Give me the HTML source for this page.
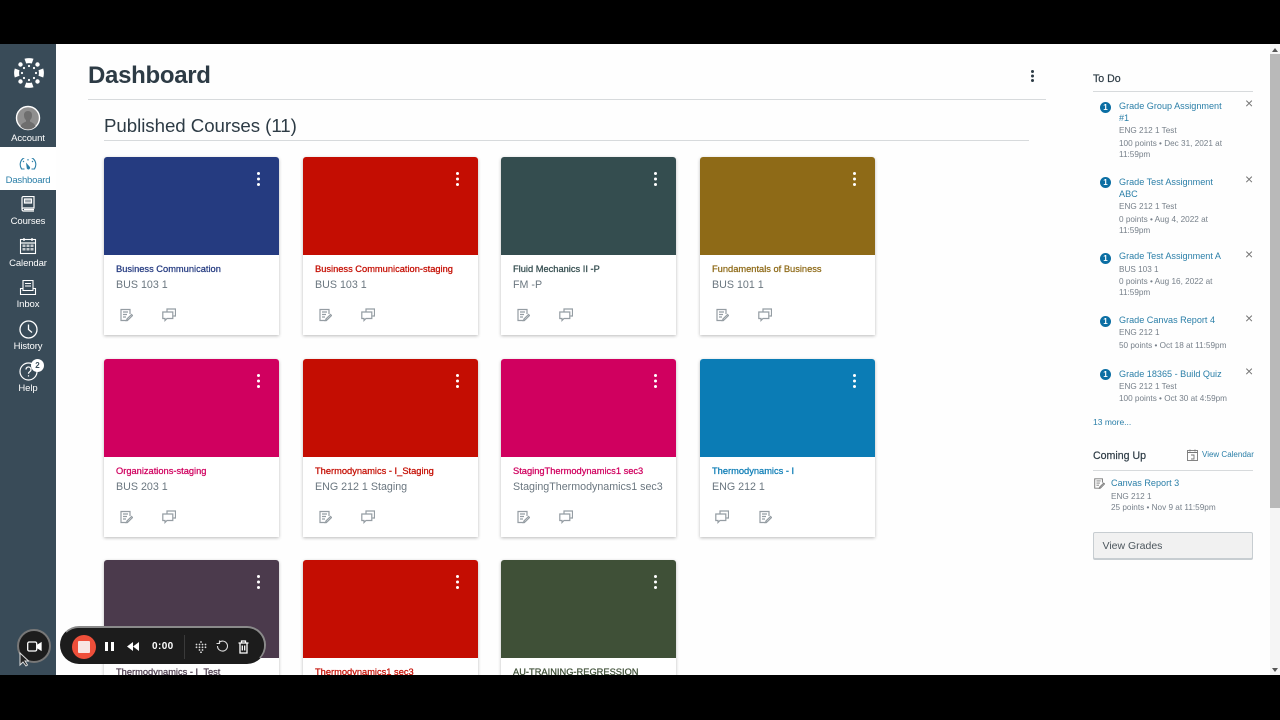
<!DOCTYPE html>
<html><head><meta charset="utf-8"><style>
html,body{margin:0;padding:0;width:1280px;height:720px;overflow:hidden;background:#000}
body{position:relative;font-family:"Liberation Sans",sans-serif}
#p{position:absolute;left:0;top:44px;width:1280px;height:631px;background:#fefefe;overflow:hidden;filter:blur(.3px)}
#p>*{position:absolute}
#nav{left:0;top:0;width:56px;height:631px;background:#394b58}
#act{left:0;top:103px;width:56px;height:43px;background:#fff}
.nl{left:0;width:56px;text-align:center;color:#fff;font-size:9.5px;line-height:12px;letter-spacing:-.1px}
.card{width:175px;height:178px;background:#fff;box-shadow:0 1px 3px rgba(0,0,0,.27);border-radius:3px 3px 0 0}
.card .h{position:absolute;left:0;top:0;width:175px;height:98px;border-radius:3px 3px 0 0}
.card .d{position:absolute;left:153px;top:15px;width:3.2px;height:3.2px;border-radius:50%;background:#fff;box-shadow:0 5.5px 0 #fff,0 11px 0 #fff}
.card .n{position:absolute;left:12px;top:106px;font-size:9.3px;line-height:12px;white-space:nowrap;-webkit-text-stroke:.25px currentColor}
.card .c{position:absolute;left:12px;top:120.5px;font-size:10.7px;color:#6b7780;line-height:14px;white-space:nowrap}
.card svg{position:absolute;top:151px;width:14px;height:14px;fill:none;stroke:#959da3;stroke-width:1.2}
.lk{color:#2b7fa8;font-size:9.1px;line-height:12px;white-space:nowrap}
.sm{color:#77808a;font-size:8.2px;line-height:11px;white-space:nowrap}
.bd{width:11px;height:11px;border-radius:50%;background:#0b6ea3;color:#fff;font-size:8px;font-weight:bold;text-align:center;line-height:11px}
.x{color:#777;font-size:14px;line-height:11px}
.rule{height:1px;background:#d7dadc}
</style></head><body>
<div id="p">
<div id="nav"></div>
<div id="act"></div>

<svg style="left:13.500px;top:13.500px" width="30" height="30" viewBox="0 0 30 30"><g fill="#fff"><path d="M10.500 .8a15 15 0 0 1 9 0l-1.700 4.700a9.500 9.500 0 0 0-5.600 0z"/><path d="M10.500 29.200a15 15 0 0 0 9 0l-1.700-4.700a9.500 9.500 0 0 1-5.600 0z"/><path d="M.8 10.500a15 15 0 0 0 0 9l4.700-1.700a9.500 9.500 0 0 1 0-5.600z"/><path d="M29.200 10.500a15 15 0 0 1 0 9l-4.700-1.700a9.500 9.500 0 0 0 0-5.600z"/><circle cx="6.500" cy="6.500" r="2.200"/><circle cx="23.500" cy="6.500" r="2.200"/><circle cx="6.500" cy="23.500" r="2.200"/><circle cx="23.500" cy="23.500" r="2.200"/><circle cx="15" cy="8" r="1.100"/><circle cx="15" cy="22" r="1.100"/><circle cx="8" cy="15" r="1.100"/><circle cx="22" cy="15" r="1.100"/><circle cx="10" cy="10" r="1.100"/><circle cx="20" cy="10" r="1.100"/><circle cx="10" cy="20" r="1.100"/><circle cx="20" cy="20" r="1.100"/></g></svg>

<svg style="left:15px;top:61px" width="26" height="26" viewBox="0 0 26 26"><circle cx="13" cy="13" r="11.500" fill="#8f8f8f" stroke="#fff" stroke-width="1.400"/><path d="M5.500 21.500c1-3.500 4-4 5.500-5v-1.500c-1.500-1-2-3-2-5 0-2.500 1.500-4 4-4s4 1.500 4 4c0 2-.5 4-2 5v1.500c1.500 1 4.500 1.500 5.500 5a11 11 0 0 1-15 0z" fill="#6e6e6e"/></svg>
<div class="nl" style="top:88.500px">Account</div>

<svg style="left:19px;top:113.500px" width="18" height="12" viewBox="0 0 18 12" fill="none" stroke="#2b7fa8" stroke-width="1.100"><path d="M5.500 11H2.600A7.800 7.800 0 1 1 15.400 11H12.500"/><path d="M9 1v1.500M4 3l1 1M14 3l-1 1"/><path d="M7 4.500l3.500 4a1.700 1.700 0 1 1-2.800 1.200z" fill="#2b7fa8" stroke="none"/></svg>
<div class="nl" style="top:130.500px;color:#2b7fa8;letter-spacing:-.2px">Dashboard</div>

<svg style="left:21px;top:152px" width="14" height="16" viewBox="0 0 14 16" fill="none" stroke="#fff" stroke-width="1.200"><path d="M1 13V2a1.500 1.500 0 0 1 1.500-1.500H13v11.500H2.500A1.500 1.500 0 0 0 1 13.500 1.500 1.500 0 0 0 2.500 15H13"/><rect x="3.500" y="3" width="7" height="4" fill="#fff" fill-opacity=".5"/><path d="M3 13.500h10"/></svg>
<div class="nl" style="top:171.500px">Courses</div>

<svg style="left:19px;top:193px" width="18" height="18" viewBox="0 0 18 18" fill="none" stroke="#fff" stroke-width="1.100"><rect x="1.500" y="2.500" width="15" height="14"/><path d="M1.500 6h15M5 1v3M13 1v3" stroke-width="1.300"/><g fill="#fff" fill-opacity=".7" stroke="none"><rect x="3.500" y="7.500" width="3" height="2.500"/><rect x="7.500" y="7.500" width="3" height="2.500"/><rect x="11.500" y="7.500" width="3" height="2.500"/><rect x="3.500" y="11" width="3" height="2.500"/><rect x="7.500" y="11" width="3" height="2.500"/><rect x="11.500" y="11" width="3" height="2.500"/></g></svg>
<div class="nl" style="top:213.500px">Calendar</div>

<svg style="left:19px;top:235px" width="18" height="17" viewBox="0 0 18 17" fill="none" stroke="#fff" stroke-width="1.100"><path d="M4 10V1.500h10V10M1.500 9.500h2.500V11.500h10V9.500h2.500v6h-15z"/><path d="M6 4.500h6M6 7h6"/></svg>
<div class="nl" style="top:255px">Inbox</div>

<svg style="left:18.500px;top:276px" width="19" height="19" viewBox="0 0 19 19" fill="none" stroke="#fff" stroke-width="1.300"><circle cx="9.500" cy="9.500" r="8.500"/><path d="M9.500 4.500v5l3.500 3"/></svg>
<div class="nl" style="top:296.500px">History</div>

<svg style="left:18.500px;top:318px" width="19" height="19" viewBox="0 0 19 19" fill="none" stroke="#fff" stroke-width="1.200"><circle cx="9.500" cy="9.500" r="8.500"/><path d="M7 7.500a2.500 2.500 0 1 1 3.800 2.100c-.9.600-1.300 1.100-1.300 2.100M9.500 13.200v1.300"/></svg>
<div style="left:31px;top:315px;width:13px;height:13px;border-radius:50%;background:#fff;color:#394b58;font-size:8px;font-weight:bold;line-height:13px;text-align:center">2</div>
<div class="nl" style="top:338.500px">Help</div>

<div style="left:88px;top:15.500px;font-size:24px;font-weight:bold;color:#2d3b45;line-height:32px;letter-spacing:-.3px">Dashboard</div>
<div style="left:1030.500px;top:26px;width:3px;height:3px;border-radius:50%;background:#2d3b45;box-shadow:0 4.500px 0 #2d3b45,0 9px 0 #2d3b45"></div>
<div class="rule" style="left:88px;top:55px;width:958px"></div>
<div style="left:104px;top:69.500px;font-size:18.7px;color:#2d3b45;line-height:24px;letter-spacing:-.05px">Published Courses (11)</div>
<div class="rule" style="left:104px;top:96px;width:925px"></div>

<div class="card" style="left:104px;top:113px"><div class="h" style="background:#253b80"></div><div class="d"></div><div class="n" style="color:#253b80">Business Communication</div><div class="c">BUS 103 1</div><svg style="left:15px" viewBox="0 0 14 14"><path d="M11 6V1.500H2v11h7"/><path d="M4 4h5M4 6.500h4M4 9h3M12.500 6.500L8 11l-.5 1.500L9 12l4.500-4.500z"/></svg><svg style="left:58px" viewBox="0 0 14 14"><path d="M5 3.500V1h8.500v7h-2"/><path d="M.8 4h10v6.500H5L3 12.500v-2H.8z"/></svg></div>
<div class="card" style="left:303px;top:113px"><div class="h" style="background:#c40d02"></div><div class="d"></div><div class="n" style="color:#c40d02">Business Communication-staging</div><div class="c">BUS 103 1</div><svg style="left:15px" viewBox="0 0 14 14"><path d="M11 6V1.500H2v11h7"/><path d="M4 4h5M4 6.500h4M4 9h3M12.500 6.500L8 11l-.5 1.500L9 12l4.500-4.500z"/></svg><svg style="left:58px" viewBox="0 0 14 14"><path d="M5 3.500V1h8.500v7h-2"/><path d="M.8 4h10v6.500H5L3 12.500v-2H.8z"/></svg></div>
<div class="card" style="left:501px;top:113px"><div class="h" style="background:#344d4f"></div><div class="d"></div><div class="n" style="color:#344d4f">Fluid Mechanics II -P</div><div class="c">FM -P</div><svg style="left:15px" viewBox="0 0 14 14"><path d="M11 6V1.500H2v11h7"/><path d="M4 4h5M4 6.500h4M4 9h3M12.500 6.500L8 11l-.5 1.500L9 12l4.500-4.500z"/></svg><svg style="left:58px" viewBox="0 0 14 14"><path d="M5 3.500V1h8.500v7h-2"/><path d="M.8 4h10v6.500H5L3 12.500v-2H.8z"/></svg></div>
<div class="card" style="left:700px;top:113px"><div class="h" style="background:#8e6a17"></div><div class="d"></div><div class="n" style="color:#8e6a17">Fundamentals of Business</div><div class="c">BUS 101 1</div><svg style="left:15px" viewBox="0 0 14 14"><path d="M11 6V1.500H2v11h7"/><path d="M4 4h5M4 6.500h4M4 9h3M12.500 6.500L8 11l-.5 1.500L9 12l4.500-4.500z"/></svg><svg style="left:58px" viewBox="0 0 14 14"><path d="M5 3.500V1h8.500v7h-2"/><path d="M.8 4h10v6.500H5L3 12.500v-2H.8z"/></svg></div>

<div class="card" style="left:104px;top:315px"><div class="h" style="background:#d0005f"></div><div class="d"></div><div class="n" style="color:#d0005f">Organizations-staging</div><div class="c">BUS 203 1</div><svg style="left:15px" viewBox="0 0 14 14"><path d="M11 6V1.500H2v11h7"/><path d="M4 4h5M4 6.500h4M4 9h3M12.500 6.500L8 11l-.5 1.500L9 12l4.500-4.500z"/></svg><svg style="left:58px" viewBox="0 0 14 14"><path d="M5 3.500V1h8.500v7h-2"/><path d="M.8 4h10v6.500H5L3 12.500v-2H.8z"/></svg></div>
<div class="card" style="left:303px;top:315px"><div class="h" style="background:#c40d02"></div><div class="d"></div><div class="n" style="color:#c40d02">Thermodynamics - I_Staging</div><div class="c">ENG 212 1 Staging</div><svg style="left:15px" viewBox="0 0 14 14"><path d="M11 6V1.500H2v11h7"/><path d="M4 4h5M4 6.500h4M4 9h3M12.500 6.500L8 11l-.5 1.500L9 12l4.500-4.500z"/></svg><svg style="left:58px" viewBox="0 0 14 14"><path d="M5 3.500V1h8.500v7h-2"/><path d="M.8 4h10v6.500H5L3 12.500v-2H.8z"/></svg></div>
<div class="card" style="left:501px;top:315px"><div class="h" style="background:#d0005f"></div><div class="d"></div><div class="n" style="color:#d0005f">StagingThermodynamics1 sec3</div><div class="c">StagingThermodynamics1 sec3</div><svg style="left:15px" viewBox="0 0 14 14"><path d="M11 6V1.500H2v11h7"/><path d="M4 4h5M4 6.500h4M4 9h3M12.500 6.500L8 11l-.5 1.500L9 12l4.500-4.500z"/></svg><svg style="left:58px" viewBox="0 0 14 14"><path d="M5 3.500V1h8.500v7h-2"/><path d="M.8 4h10v6.500H5L3 12.500v-2H.8z"/></svg></div>
<div class="card" style="left:700px;top:315px"><div class="h" style="background:#0b7cb5"></div><div class="d"></div><div class="n" style="color:#0b7cb5">Thermodynamics - I</div><div class="c">ENG 212 1</div><svg style="left:15px" viewBox="0 0 14 14"><path d="M5 3.500V1h8.500v7h-2"/><path d="M.8 4h10v6.500H5L3 12.500v-2H.8z"/></svg><svg style="left:58px" viewBox="0 0 14 14"><path d="M11 6V1.500H2v11h7"/><path d="M4 4h5M4 6.500h4M4 9h3M12.500 6.500L8 11l-.5 1.500L9 12l4.500-4.500z"/></svg></div>

<div class="card" style="left:104px;top:516px"><div class="h" style="background:#4b3a4c"></div><div class="d"></div><div class="n" style="color:#4b3a4c;top:106px">Thermodynamics - I_Test</div></div>
<div class="card" style="left:303px;top:516px"><div class="h" style="background:#c40d02"></div><div class="d"></div><div class="n" style="color:#c40d02;top:106px">Thermodynamics1 sec3</div></div>
<div class="card" style="left:501px;top:516px"><div class="h" style="background:#3f5037"></div><div class="d"></div><div class="n" style="color:#3f5037;top:106px">AU-TRAINING-REGRESSION</div></div>

<div style="left:1093px;top:28px;font-size:10.6px;color:#2d3b45;line-height:14px;-webkit-text-stroke:.2px #2d3b45">To Do</div>
<div class="rule" style="left:1093px;top:47px;width:160px"></div>

<div class="bd" style="left:1100px;top:57.500px">1</div><div class="lk" style="left:1119px;top:55.500px">Grade Group Assignment<br>#1</div><div class="sm" style="left:1119px;top:81px">ENG 212 1 Test</div><div class="sm" style="left:1119px;top:94px">100 points • Dec 31, 2021 at<br>11:59pm</div><div class="x" style="left:1245px;top:54px">×</div>
<div class="bd" style="left:1100px;top:133px">1</div><div class="lk" style="left:1119px;top:131.500px">Grade Test Assignment<br>ABC</div><div class="sm" style="left:1119px;top:157px">ENG 212 1 Test</div><div class="sm" style="left:1119px;top:169.500px">0 points • Aug 4, 2022 at<br>11:59pm</div><div class="x" style="left:1245px;top:130px">×</div>
<div class="bd" style="left:1100px;top:209px">1</div><div class="lk" style="left:1119px;top:206px">Grade Test Assignment A</div><div class="sm" style="left:1119px;top:220px">BUS 103 1</div><div class="sm" style="left:1119px;top:232px">0 points • Aug 16, 2022 at<br>11:59pm</div><div class="x" style="left:1245px;top:205px">×</div>
<div class="bd" style="left:1100px;top:272px">1</div><div class="lk" style="left:1119px;top:270px">Grade Canvas Report 4</div><div class="sm" style="left:1119px;top:283px">ENG 212 1</div><div class="sm" style="left:1119px;top:296px">50 points • Oct 18 at 11:59pm</div><div class="x" style="left:1245px;top:269px">×</div>
<div class="bd" style="left:1100px;top:325px">1</div><div class="lk" style="left:1119px;top:323.500px">Grade 18365 - Build Quiz</div><div class="sm" style="left:1119px;top:337px">ENG 212 1 Test</div><div class="sm" style="left:1119px;top:348.500px">100 points • Oct 30 at 4:59pm</div><div class="x" style="left:1245px;top:322px">×</div>
<div class="lk" style="left:1093px;top:372px;font-size:8.500px">13 more...</div>

<div style="left:1093px;top:405px;font-size:10.6px;color:#2d3b45;line-height:14px;-webkit-text-stroke:.2px #2d3b45">Coming Up</div>
<svg style="left:1187px;top:405px" width="11" height="12" viewBox="0 0 11 12" fill="none" stroke="#777" stroke-width=".9"><rect x=".5" y="1.500" width="10" height="10"/><path d="M.5 3.500h10M3 .5v2M8 .5v2M4 6h3v4H4"/></svg>
<div class="lk" style="left:1202px;top:405px;font-size:8px">View Calendar</div>
<div class="rule" style="left:1093px;top:426px;width:160px"></div>
<svg style="left:1093px;top:433px" width="12" height="13" viewBox="0 0 14 14" fill="none" stroke="#777" stroke-width="1.100"><path d="M11 6V1.500H2v11h7"/><path d="M4 4h5M4 6.500h4M4 9h3M12.500 6.500L8 11l-.5 1.500L9 12l4.500-4.500z"/></svg>
<div class="lk" style="left:1111px;top:433px">Canvas Report 3</div>
<div class="sm" style="left:1111px;top:447px">ENG 212 1</div>
<div class="sm" style="left:1111px;top:458px">25 points • Nov 9 at 11:59pm</div>
<div style="left:1093px;top:488px;width:158px;height:25px;background:#f1f1f1;border:1px solid #c7cdd1;border-radius:2px;box-shadow:0 1px 0 #c7cdd1;color:#4c565d;font-size:10.5px;line-height:27px;text-indent:8.500px">View Grades</div>

<div style="left:1270px;top:0;width:10px;height:631px;background:#f5f5f5"></div>
<svg style="left:1271px;top:3px" width="8" height="6" viewBox="0 0 8 6"><path d="M1 5h6L4 1z" fill="#555"/></svg>
<div style="left:1270px;top:10px;width:10px;height:454px;background:#b9b9b9"></div>
<svg style="left:1271px;top:623px" width="8" height="6" viewBox="0 0 8 6"><path d="M1 1h6L4 5z" fill="#555"/></svg>

<div style="left:17px;top:585px;width:34px;height:34px;border-radius:50%;background:#1c1c1c;border:2px solid #777;box-sizing:border-box"></div>
<svg style="left:27px;top:597px" width="15" height="11" viewBox="0 0 15 11" fill="none" stroke="#fff" stroke-width="1.300"><rect x=".7" y="1" width="9" height="9" rx="1.500"/><path d="M10 4.500l4-2.500v7l-4-2.500" fill="#fff"/></svg>
<svg style="left:19px;top:608px" width="10" height="15" viewBox="0 0 10 15"><path d="M1 1v12l3-3 3 4 1.500-1-2.500-4h3.500z" fill="#222" stroke="#ddd" stroke-width="1"/></svg>

<div style="left:60px;top:582px;width:206px;height:38px;border-radius:19px;background:#1c1c1c;border:2px solid #8a8a8a;box-sizing:border-box;border-left-color:transparent;border-bottom-color:transparent"></div>
<div style="left:61px;top:584px;width:203px;height:35px;border-radius:18px;background:#1c1c1c"></div>
<div style="left:72px;top:591px;width:24px;height:24px;border-radius:50%;background:#ee4f3a"></div>
<div style="left:78px;top:597px;width:12px;height:12px;border-radius:1px;background:#f8e6e3"></div>
<div style="left:105px;top:598px;width:3px;height:9px;background:#fff"></div>
<div style="left:110.500px;top:598px;width:3px;height:9px;background:#fff"></div>
<svg style="left:127px;top:598px" width="12" height="9" viewBox="0 0 12 9"><path d="M6 0v9L0 4.500zM12 0v9L6 4.500z" fill="#fff"/></svg>
<div style="left:152px;top:596px;font-size:10px;font-weight:bold;color:#fff;line-height:14px;letter-spacing:.4px">0:00</div>
<div style="left:184px;top:591px;width:1px;height:24px;background:#3a3a3a"></div>
<svg style="left:195px;top:597px" width="12" height="12" viewBox="0 0 12 12" fill="#ddd"><circle cx="6" cy="1" r=".9"/><circle cx="1.500" cy="3.500" r=".9"/><circle cx="4.500" cy="3.500" r=".9"/><circle cx="7.500" cy="3.500" r=".9"/><circle cx="10.500" cy="3.500" r=".9"/><circle cx="1.500" cy="6.300" r=".9"/><circle cx="4.500" cy="6.300" r=".9"/><circle cx="7.500" cy="6.300" r=".9"/><circle cx="10.500" cy="6.300" r=".9"/><circle cx="4.500" cy="9" r=".9"/><circle cx="7.500" cy="9" r=".9"/><circle cx="6" cy="11.300" r=".9"/></svg>
<svg style="left:216px;top:596px" width="12" height="13" viewBox="0 0 12 13" fill="none" stroke="#ddd" stroke-width="1.100"><path d="M3 2.500a5 5 0 1 1-1.500 3.500"/><path d="M3.500.5v3h-3"/></svg>
<svg style="left:238px;top:596px" width="11" height="14" viewBox="0 0 11 14" fill="none" stroke="#fff" stroke-width="1.300"><path d="M.5 3h10M3.500 3V1h4v2M2 3v10h7V3M4.300 5.500v5M6.700 5.500v5"/></svg>
</div>
</body></html>
